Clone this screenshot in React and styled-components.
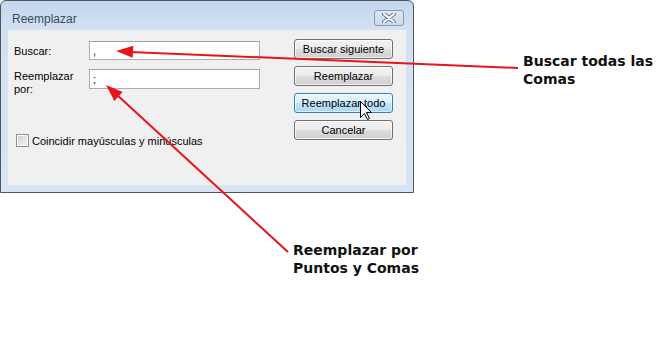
import React from 'react';
import styled, { createGlobalStyle } from 'styled-components';

const GlobalStyle = createGlobalStyle`
  html, body {
    margin: 0;
    padding: 0;
    background: #ffffff;
  }
  body {
    font-family: "Liberation Sans", Arial, sans-serif;
  }
`

const Stage = styled.div`
  position: relative;
  width: 662px;
  height: 346px;
  overflow: hidden;
  background: #ffffff;
`

const Window = styled.div`
  width: 414px;
  height: 193px;
  box-sizing: border-box;
  border: 1px solid #545454;
  border-radius: 6px 6px 0 0;
  background: linear-gradient(#c2d6ee, #d2e1f2 28px, #d7e4f3);
  padding: 0 7px 7px 7px;
  display: flex;
  flex-direction: column;
`

const TitleBar = styled.div`
  height: 29px;
  display: flex;
  align-items: flex-start;
  justify-content: space-between;
  padding: 0 2px 0 4px;
`

const Title = styled.div`
  font-size: 12px;
  color: #3d4a5a;
  margin-top: 11px;
`

const CloseButton = styled.div`
  width: 30px;
  height: 16px;
  margin-top: 9px;
  box-sizing: border-box;
  border: 1px solid #8a9bb0;
  border-radius: 3px;
  background: linear-gradient(#dce7f4, #cbd9ea);
  display: flex;
  align-items: center;
  justify-content: center;
`

const Panel = styled.div`
  flex: 1;
  background: #f0f0f0;
  display: flex;
`

const FormColumn = styled.div`
  padding: 11px 0 0 6px;
  display: flex;
  flex-direction: column;
`

const FieldRow = styled.div`
  display: flex;
  align-items: ${p => (p.$top ? 'flex-start' : 'center')};
  margin-bottom: ${p => p.$gap || 0}px;
`

const Label = styled.div`
  width: 75px;
  font-size: 11px;
  line-height: 13px;
  color: #000;
  padding-top: ${p => p.$pad || 0}px;
`

const Field = styled.div`
  width: 171px;
  height: ${p => p.$h}px;
  box-sizing: border-box;
  border: 1px solid #abadb3;
  border-top-color: #a0a3aa;
  background: #ffffff;
  font-size: 11px;
  padding: 3px 0 0 3px;
  color: #000;
`

const CheckRow = styled.div`
  display: flex;
  align-items: center;
  margin-left: 2px;
  gap: 3px;
`

const CheckBox = styled.div`
  width: 13px;
  height: 13px;
  box-sizing: border-box;
  border: 1px solid #8e8f8f;
  background: #ffffff;
  padding: 1px;
  &::after {
    content: '';
    display: block;
    width: 100%;
    height: 100%;
    background: linear-gradient(135deg, #cbcfd5, #f6f6f6);
  }
`

const CheckLabel = styled.span`
  font-size: 11px;
  color: #000;
`

const ButtonColumn = styled.div`
  margin: 9px 13px 0 auto;
  display: flex;
  flex-direction: column;
  gap: 7px;
`

const Button = styled.div`
  width: 99px;
  height: 20px;
  box-sizing: border-box;
  border: 1px solid ${p => (p.$hover ? '#3c7fb1' : '#707070')};
  border-radius: 3px;
  background: ${p =>
    p.$hover
      ? 'linear-gradient(#eaf6fd, #d9f0fc 50%, #bee6fd 51%, #a7d9f5)'
      : 'linear-gradient(#f2f2f2, #ebebeb 50%, #dddddd 51%, #cfcfcf)'};
  box-shadow: inset 0 0 0 1px ${p => (p.$hover ? 'rgba(255,255,255,0.6)' : 'rgba(255,255,255,0.7)')};
  font-size: 11px;
  color: #000;
  display: flex;
  align-items: center;
  justify-content: center;
`

const Overlay = styled.svg`
  position: absolute;
  left: 0;
  top: 0;
  pointer-events: none;
`

const Callout = styled.div`
  position: absolute;
  left: ${p => p.$x}px;
  top: ${p => p.$y}px;
  font-family: "DejaVu Sans", Verdana, sans-serif;
  font-weight: bold;
  font-size: 14px;
  line-height: 18px;
  color: #111111;
  white-space: nowrap;
`

const RED = '#e8141c';

function App() {
  return (
    <Stage>
      <GlobalStyle />
      <Window>
        <TitleBar>
          <Title>Reemplazar</Title>
          <CloseButton>
            <svg width="14" height="10" viewBox="0 0 14 10">
              <path d="M2 1 L12 9 M12 1 L2 9" stroke="#6d7b8d" strokeWidth="4" strokeLinecap="round" />
              <path d="M2 1 L12 9 M12 1 L2 9" stroke="#ffffff" strokeWidth="2" strokeLinecap="round" />
            </svg>
          </CloseButton>
        </TitleBar>
        <Panel>
          <FormColumn>
            <FieldRow $gap={9}>
              <Label $pad={2}>Buscar:</Label>
              <Field $h={19}>,</Field>
            </FieldRow>
            <FieldRow $top $gap={38}>
              <Label $pad={1}>Reemplazar<br />por:</Label>
              <Field $h={20}>;</Field>
            </FieldRow>
            <CheckRow>
              <CheckBox />
              <CheckLabel>Coincidir mayúsculas y minúsculas</CheckLabel>
            </CheckRow>
          </FormColumn>
          <ButtonColumn>
            <Button>Buscar siguiente</Button>
            <Button>Reemplazar</Button>
            <Button $hover>Reemplazar todo</Button>
            <Button>Cancelar</Button>
          </ButtonColumn>
        </Panel>
      </Window>

      <Overlay width="662" height="346" viewBox="0 0 662 346">
        <line x1="518" y1="68" x2="130" y2="52" stroke={RED} strokeWidth="2" />
        <polygon points="116,51 133.3,45.7 132.7,57.7" fill={RED} />
        <line x1="288" y1="252" x2="116" y2="94" stroke={RED} strokeWidth="2" />
        <polygon points="106,85 114.4,100.9 122.6,92.1" fill={RED} />
        <path
          d="M360.5 101.5 L360.5 117.5 L364.5 113.5 L367.5 119.5 L369.5 118.5 L366.5 112.5 L371.5 112.5 Z"
          fill="#ffffff"
          stroke="#000000"
          strokeWidth="1"
        />
      </Overlay>

      <Callout $x={523} $y={52}>Buscar todas las<br />Comas</Callout>
      <Callout $x={293} $y={241}>Reemplazar por<br />Puntos y Comas</Callout>
    </Stage>
  );
}

export default App;
